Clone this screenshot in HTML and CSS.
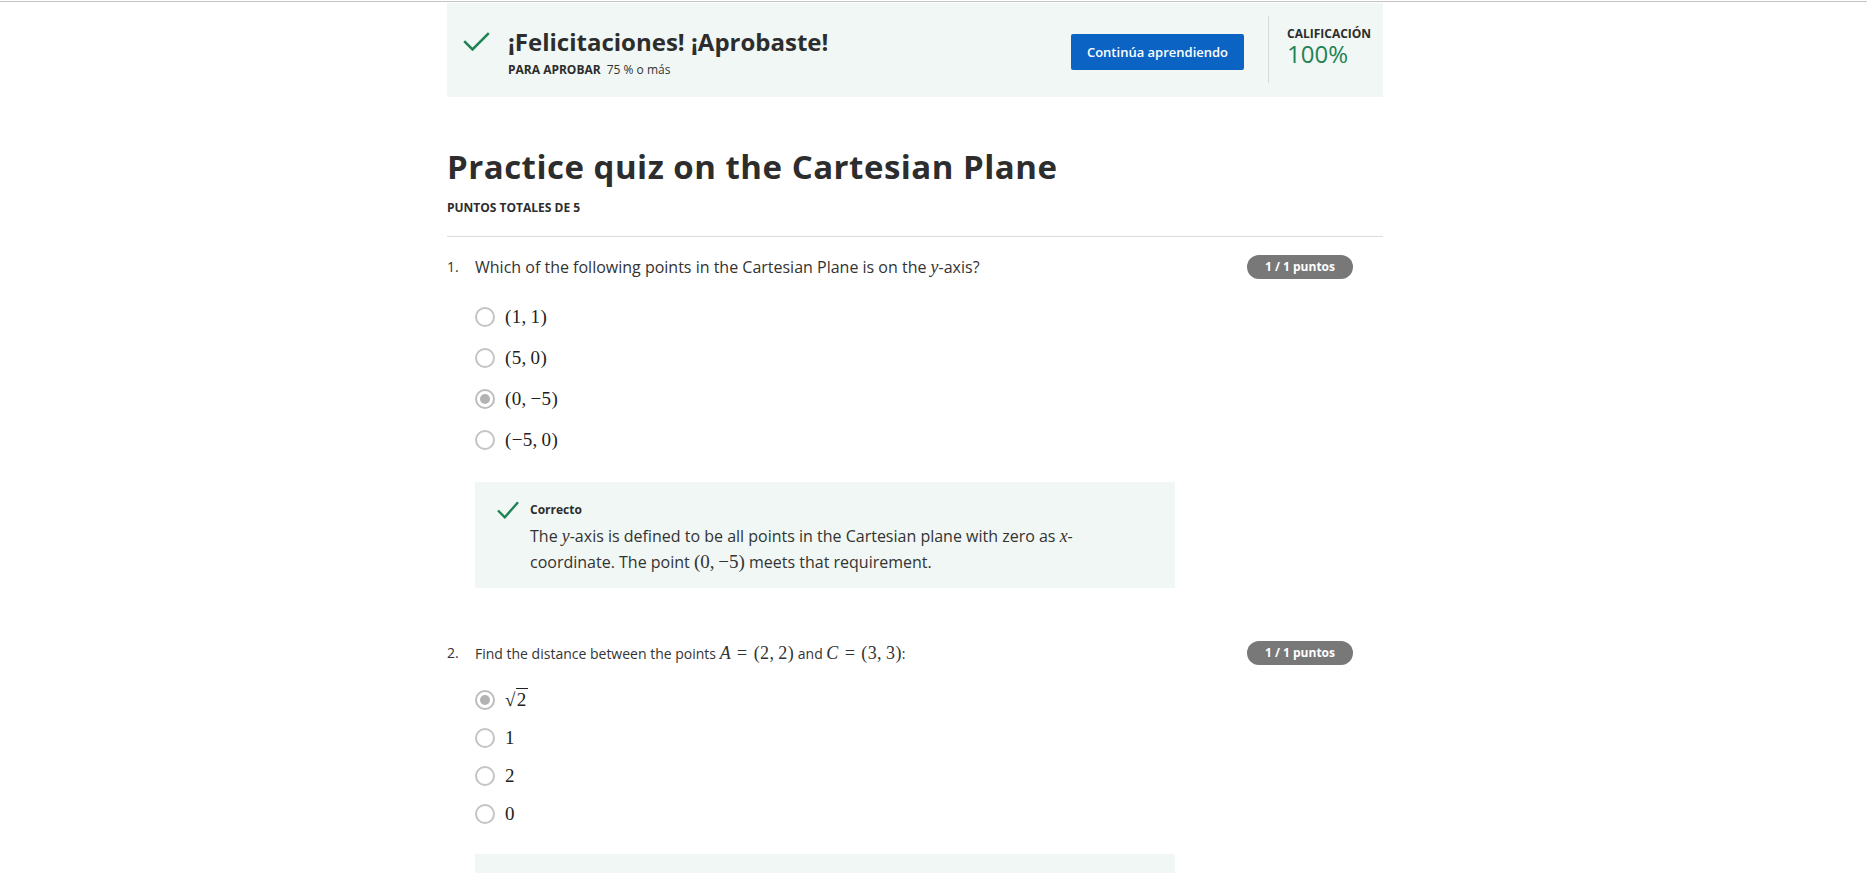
FILE: index.html
```html
<!DOCTYPE html>
<html lang="es">
<head>
<meta charset="utf-8">
<title>Practice quiz on the Cartesian Plane</title>
<link rel="stylesheet" href="styles.css">
</head>
<body>
<div class="topline"></div>
<div class="page">
  <section class="banner">
    <div class="banner-main">
      <svg class="banner-check" width="27" height="19" viewBox="0 0 27 19"><polyline points="1.2,9.2 9.5,17.4 25.8,1.2" fill="none" stroke="#1f8354" stroke-width="2.6"/></svg>
      <div class="banner-text">
        <div class="banner-title">¡Felicitaciones! ¡Aprobaste!</div>
        <div class="banner-sub"><b>PARA APROBAR</b><span>75 % o más</span></div>
      </div>
    </div>
    <div class="banner-actions">
      <button class="btn">Continúa aprendiendo</button>
      <div class="vdiv"></div>
      <div class="grade">
        <div class="grade-label">CALIFICACIÓN</div>
        <div class="grade-value">100%</div>
      </div>
    </div>
  </section>

  <header class="quiz-head">
    <h1>Practice quiz on the Cartesian Plane</h1>
    <div class="total">PUNTOS TOTALES DE 5</div>
  </header>
  <div class="rule"></div>

  <section class="question">
    <div class="q-row">
      <div class="q-num">1.</div>
      <div class="q-text">Which of the following points in the Cartesian Plane is on the <i class="mi">y</i>-axis?</div>
      <div class="pill">1 / 1 puntos</div>
    </div>
    <ul class="options tall">
      <li class="opt"><span class="radio"></span><span class="math">(1,&thinsp;1)</span></li>
      <li class="opt"><span class="radio"></span><span class="math">(5,&thinsp;0)</span></li>
      <li class="opt"><span class="radio on"></span><span class="math">(0,&thinsp;−5)</span></li>
      <li class="opt"><span class="radio"></span><span class="math">(−5,&thinsp;0)</span></li>
    </ul>
    <div class="feedback">
      <svg class="fb-check" width="22" height="18" viewBox="0 0 22 18"><polyline points="1,9.5 7.8,16.3 21,1.2" fill="none" stroke="#1f8354" stroke-width="2.4"/></svg>
      <div class="fb-body">
        <div class="fb-title">Correcto</div>
        <p class="fb-text">The <i class="mi">y</i>-axis is defined to be all points in the Cartesian plane with zero as <i class="mi">x</i>-coordinate. The point <span class="math-inline">(0,&thinsp;−5)</span> meets that requirement.</p>
      </div>
    </div>
  </section>

  <section class="question">
    <div class="q-row">
      <div class="q-num">2.</div>
      <div class="q-text small">Find the distance between the points <span class="math-inline"><i>A</i><span class="rel">=</span>(2,&thinsp;2)</span> and <span class="math-inline"><i>C</i><span class="rel">=</span>(3,&thinsp;3)</span>:</div>
      <div class="pill">1 / 1 puntos</div>
    </div>
    <ul class="options short">
      <li class="opt"><span class="radio on"></span><span class="math">√<span class="rad">2</span></span></li>
      <li class="opt"><span class="radio"></span><span class="math">1</span></li>
      <li class="opt"><span class="radio"></span><span class="math">2</span></li>
      <li class="opt"><span class="radio"></span><span class="math">0</span></li>
    </ul>
    <div class="feedback later">
      <svg class="fb-check" width="22" height="18" viewBox="0 0 22 18"><polyline points="1,9.5 7.8,16.3 21,1.2" fill="none" stroke="#1f8354" stroke-width="2.4"/></svg>
      <div class="fb-body">
        <div class="fb-title">Correcto</div>
        <p class="fb-text">The distance is the square root of the sum of the squared differences.</p>
      </div>
    </div>
  </section>
</div>
</body>
</html>
```

FILE: styles.css
```css
* { box-sizing: border-box; }
html, body { margin: 0; padding: 0; background: #fff; }
body {
  font-family: "Open Sans", "Liberation Sans", sans-serif;
  color: #333;
  overflow: hidden;
}
.topline { height: 1px; margin-top: 1px; background: #c4c4c4; }
.page { width: 936px; margin: 1px 0 0 447px; }

/* banner */
.banner {
  display: flex;
  height: 94px;
  background: #f0f7f4;
}
.banner-main { display: flex; flex: 1; padding: 23px 0 0 16px; }
.banner-check { margin: 6px 18px 0 0; flex: none; }
.banner-title { font-size: 24px; line-height: 32px; font-weight: 700; color: #2d2d2d; }
.banner-sub { margin-top: 4px; font-size: 12px; line-height: 16px; color: #333; }
.banner-sub b { font-weight: 700; margin-right: 6px; color: #2d2d2d; }
.banner-actions { display: flex; align-items: flex-start; }
.btn {
  margin-top: 31px;
  width: 173px;
  height: 36px;
  border: 0;
  border-radius: 2px;
  background: #0b64c3;
  color: #fff;
  font-family: "Open Sans", sans-serif;
  font-size: 13px;
  font-weight: 600;
  padding: 0;
}
.vdiv { width: 1px; height: 67px; margin: 13px 18px 0 24px; background: #d6dcd9; }
.grade { width: 96px; padding-top: 23px; }
.grade-label { font-size: 12px; line-height: 16px; font-weight: 700; color: #2d2d2d; }
.grade-value { font-size: 24px; line-height: 24px; color: #1f8354; }

/* header */
.quiz-head { padding-top: 50px; }
h1 { margin: 0; font-size: 33px; line-height: 40px; font-weight: 700; letter-spacing: 0.5px; color: #2d2d2d; }
.total { margin-top: 13px; font-size: 12px; line-height: 16px; font-weight: 700; color: #2d2d2d; }
.rule { height: 1px; margin-top: 20px; background: #dcdcdc; }

/* questions */
.question { padding-top: 18px; margin-bottom: 35px; }
.q-row { display: flex; align-items: flex-start; height: 24px; }
.q-num { width: 28px; flex: none; font-size: 14px; line-height: 24px; color: #333; }
.q-text { flex: 1; font-size: 16px; line-height: 24px; color: #333; }
.q-text.small { font-size: 14px; }
.q-text.small .math-inline { font-size: 18px; letter-spacing: 0.4px; }
.rel { margin: 0 6px; }
.pill {
  flex: none;
  width: 106px;
  height: 24px;
  margin-right: 30px;
  border-radius: 12px;
  background: #787878;
  color: #fff;
  font-size: 12px;
  font-weight: 700;
  line-height: 24px;
  text-align: center;
}
.mi { font-family: "Liberation Serif", "DejaVu Serif", serif; font-style: italic; font-size: 1.12em; }
.math-inline { font-family: "Liberation Serif", "DejaVu Serif", serif; font-size: 19px; }

.options { list-style: none; margin: 17px 0 0 28px; padding: 0; }
.options.short { margin-top: 16px; }
.opt { display: flex; align-items: center; }
.options.tall .opt { height: 41px; }
.options.short .opt { height: 38px; }
.radio {
  flex: none;
  width: 20px;
  height: 20px;
  border: 2px solid #c4c4c4;
  border-radius: 50%;
  margin-right: 10px;
  display: flex;
  align-items: center;
  justify-content: center;
}
.radio.on { border-color: #bdbdbd; }
.radio.on::after {
  content: "";
  width: 10px;
  height: 10px;
  border-radius: 50%;
  background: #b3b3b3;
}
.math { font-family: "Liberation Serif", "DejaVu Serif", serif; font-size: 19px; color: #222; letter-spacing: 0.3px; }
.rad { border-top: 1px solid #222; padding: 0 1px; }

.feedback {
  display: flex;
  margin: 22px 0 0 28px;
  width: 700px;
  padding: 19px 24px 13px 22px;
  background: #f0f7f4;
}
.feedback.later { margin-top: 21px; }
.fb-check { flex: none; margin: 0 11px 0 0; }
.fb-title { margin-top: 1px; font-size: 12px; line-height: 16px; font-weight: 700; color: #2d2d2d; }
.fb-text { margin: 6px 0 0; font-size: 16px; line-height: 25px; color: #333; }
.fb-text .math-inline { font-size: 19px; }
```
